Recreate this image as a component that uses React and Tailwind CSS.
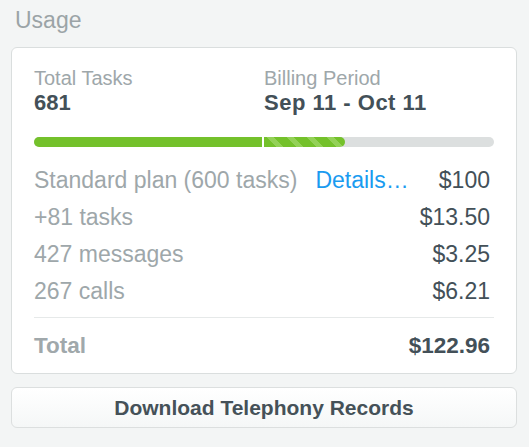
export default function App() {
  const font = { fontFamily: '"Liberation Sans", Arial, Helvetica, sans-serif' };
  const rows = [
    ["+81 tasks", "$13.50"],
    ["427 messages", "$3.25"],
    ["267 calls", "$6.21"],
  ];
  return (
    <div className="min-h-[447px] w-full bg-[#f3f5f5] pl-[11px] pr-[12px] pt-[9px]" style={font}>
      <div className="h-[22px] pl-[4px] text-[23px] leading-[22px] text-[#9ba4a7]">Usage</div>
      <div className="mt-[16px] rounded-[6px] border border-[#dadede] bg-white px-[22px] pt-[20px] pb-[9px]">
        <div className="flex">
          <div className="w-[230px]">
            <div className="text-[20px] leading-[20px] text-[#9ea7aa]">Total Tasks</div>
            <div className="mt-[3px] text-[22px] font-bold leading-[24px] text-[#435058]">681</div>
          </div>
          <div>
            <div className="text-[20px] leading-[20px] text-[#9ea7aa]">Billing Period</div>
            <div className="mt-[3px] text-[22px] font-bold leading-[24px] tracking-[0.5px] text-[#435058]">Sep 11 - Oct 11</div>
          </div>
        </div>
        <div className="mt-[22px] flex h-[10px] overflow-hidden rounded-full bg-[#dcdfdf]">
          <div className="h-full w-[228px] shrink-0 bg-[#74c12b]" />
          <div className="h-full w-[2px] shrink-0 bg-white" />
          <div
            className="h-full w-[81px] shrink-0 rounded-r-full bg-[#74c12b] bg-[repeating-linear-gradient(45deg,#74c12b_0px,#74c12b_9px,#93d157_9px,#93d157_14px)]"
          />
        </div>
        <div className="mt-[15px] pr-[4px]">
          <div className="flex h-[37px] items-center text-[23px] leading-[37px]">
            <span className="text-[#9ea7aa]">Standard plan (600 tasks)</span>
            <span className="ml-[18px] text-[#1a9bf0]">Details…</span>
            <span className="ml-auto text-[#435058]">$100</span>
          </div>
          {rows.map(([l, v]) => (
            <div key={l} className="flex h-[37px] items-center justify-between text-[23px] leading-[37px]">
              <span className="text-[#9ea7aa]">{l}</span>
              <span className="text-[#435058]">{v}</span>
            </div>
          ))}
        </div>
        <div className="mt-[7px] h-px bg-[#e6e9e9]" />
        <div className="mt-[9px] flex h-[37px] items-center justify-between pr-[4px] text-[22.5px] font-bold leading-[37px]">
          <span className="text-[#a0a8ab]">Total</span>
          <span className="text-[#435058]">$122.96</span>
        </div>
      </div>
      <div className="mt-[13px] flex h-[41px] items-center justify-center rounded-[6px] border border-[#dcdfdf] bg-gradient-to-b from-white to-[#f5f7f7] text-[21px] font-bold text-[#455158]">
        Download Telephony Records
      </div>
    </div>
  );
}
